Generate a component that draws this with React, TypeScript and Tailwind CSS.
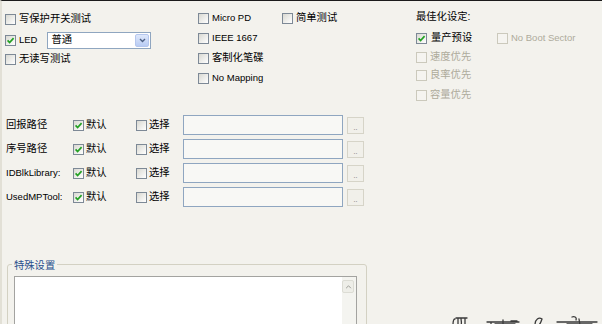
import React from "react";

function Cb({ checked = false, disabled = false }: { checked?: boolean; disabled?: boolean }) {
  return (
    <span
      className={
        disabled
          ? "relative inline-flex w-[11px] h-[11px] shrink-0 border border-[#cbc9bc] bg-[#f5f4f0]"
          : "relative inline-flex w-[11px] h-[11px] shrink-0 border border-[#7d8996] bg-gradient-to-br from-[#d9d9d2] to-white"
      }
    >
      {checked && (
        <svg viewBox="0 0 9 9" className="absolute inset-0 w-[9px] h-[9px]">
          <path d="M1.6 4.4 L3.6 6.5 L7.6 2.2" fill="none" stroke="#22a122" strokeWidth="1.7" />
        </svg>
      )}
    </span>
  );
}

function Item({
  label,
  checked = false,
  disabled = false,
  latin = false,
  gap = "gap-[3px]",
}: {
  label: string;
  checked?: boolean;
  disabled?: boolean;
  latin?: boolean;
  gap?: string;
}) {
  return (
    <div className={"flex items-center " + gap}>
      <Cb checked={checked} disabled={disabled} />
      <span
        className={
          (latin ? "text-[9.5px] " : "text-[10.3px] ") +
          (disabled ? "text-[#aeab9c]" : "text-black") +
          " leading-none whitespace-nowrap"
        }
      >
        {label}
      </span>
    </div>
  );
}

function PathRow({ label, latin = false }: { label: string; latin?: boolean }) {
  return (
    <div className="flex items-center h-[20px]">
      <span className={(latin ? "text-[9.5px]" : "text-[10.3px]") + " w-[68px] pl-[1px] leading-none text-black whitespace-nowrap"}>
        {label}
      </span>
      <div className="w-[63px]">
        <Item label="默认" checked gap="gap-[2px]" />
      </div>
      <div className="w-[47px]">
        <Item label="选择" gap="gap-[2px]" />
      </div>
      <div className="w-[160px] h-[20px] border border-[#8fa6c0] bg-[#f8f8f5]" />
      <div className="ml-[4px] w-[17px] h-[17px] border border-[#d6d4c8] bg-[#f1f0ea] flex items-end justify-center pb-[2px]">
        <span className="text-[7px] leading-none text-[#666]">..</span>
      </div>
    </div>
  );
}

export default function App() {
  return (
    <div className="relative w-[602px] h-[324px] overflow-hidden bg-[#f3f2ed] border-t border-[#1b1b1b] border-l-2 border-l-[#e2e0d6] font-['Liberation_Sans','Noto_Sans_CJK_SC',sans-serif] text-black">
      {/* top section */}
      <div className="flex h-[104px]">
        {/* col 1 */}
        <div className="w-[196px] pl-[3px] pt-[8px] flex flex-col">
          <div className="h-[20px] flex items-center">
            <Item label="写保护开关测试" />
          </div>
          <div className="h-[20px] mt-[1px] flex items-center">
            <Item label="LED" latin checked />
            <div className="ml-[10px] w-[104px] h-[17px] border border-[#8fa6c0] bg-white flex items-center">
              <span className="pl-[3px] text-[10.3px] leading-none flex-1">普通</span>
              <div className="w-[14px] h-[13px] mr-[1px] rounded-[2px] bg-gradient-to-b from-[#dfe8fb] to-[#b8ccf4] border border-[#b5c7ee] flex items-center justify-center">
                <svg viewBox="0 0 8 6" className="w-[7px] h-[5px]">
                  <path d="M1 1.2 L4 4.3 L7 1.2" fill="none" stroke="#4d6185" strokeWidth="1.6" />
                </svg>
              </div>
            </div>
          </div>
          <div className="h-[18px] flex items-center">
            <Item label="无读写测试" />
          </div>
        </div>
        {/* col 2 */}
        <div className="w-[218px] pt-[7px] flex flex-col">
          <div className="h-[20px] flex items-center">
            <div className="w-[84px]">
              <Item label="Micro PD" latin />
            </div>
            <Item label="简单测试" />
          </div>
          <div className="h-[20px] flex items-center">
            <Item label="IEEE 1667" latin />
          </div>
          <div className="h-[20px] flex items-center">
            <Item label="客制化笔碟" />
          </div>
          <div className="h-[20px] flex items-center">
            <Item label="No Mapping" latin />
          </div>
        </div>
        {/* col 3 */}
        <div className="flex-1 pt-[6px] flex flex-col">
          <div className="h-[20px] flex items-center">
            <span className="text-[10.3px] leading-none">最佳化设定:</span>
          </div>
          <div className="h-[20px] mt-[1px] flex items-center">
            <div className="w-[81px]">
              <Item label="量产预设" checked gap="gap-[4px]" />
            </div>
            <Item label="No Boot Sector" latin disabled />
          </div>
          <div className="h-[18px] flex items-center">
            <Item label="速度优先" disabled />
          </div>
          <div className="h-[18px] flex items-center">
            <Item label="良率优先" disabled />
          </div>
          <div className="h-[20px] mt-[1px] flex items-center">
            <Item label="容量优先" disabled />
          </div>
        </div>
      </div>

      {/* path rows */}
      <div className="mt-[10px] pl-[3px] flex flex-col gap-[4px]">
        <PathRow label="回报路径" />
        <PathRow label="序号路径" />
        <PathRow label="IDBlkLibrary:" latin />
        <PathRow label="UsedMPTool:" latin />
      </div>

      {/* group box */}
      <div className="relative mt-[57px] ml-[5px] w-[360px] h-[90px] border border-[#d3d1c3] rounded-[3px] pt-[11px] pl-[6px]">
        <span className="absolute left-[4px] -top-[6px] px-[2px] bg-[#f3f2ed] text-[10.3px] leading-[14px] text-[#284f8c]">
          特殊设置
        </span>
        <div className="w-[343px] h-[70px] border border-[#a3a3a0] bg-white flex justify-end">
          <div className="w-[14px] h-full bg-[#f4f4f0] pt-[3px] pr-[1px]">
            <div className="w-[12px] h-[13px] border border-[#dcdcd4] bg-[#eeeee8] rounded-[2px] flex items-center justify-center">
              <svg viewBox="0 0 8 5" className="w-[7px] h-[4px]">
                <path d="M1 4 L4 1 L7 4" fill="none" stroke="#9a9a94" strokeWidth="1.2" />
              </svg>
            </div>
          </div>
        </div>
      </div>

      {/* watermark fragment */}
      <svg className="absolute left-[445px] top-[312px] w-[157px] h-[12px]" viewBox="0 0 157 12">
        <g fill="none" stroke="#3a3a3a" strokeWidth="1.3" strokeLinecap="round">
          <path d="M6 12 C6 8 7 6 8 6 M11 12 L11 5 M14 5 C14 8 15 10 14 12 M18 6 L18 12 M9 5 L20 5" />
          <path d="M40 9 L72 9 M44 9 L44 12 M56 7 L56 12 M64 8 L70 8 M48 11 L68 11" />
          <path d="M88 12 C88 6 92 4 95 6 C94 9 93 11 92 12" />
          <path d="M110 9 L150 9 M125 4 C127 3 130 4 129 7 M120 11 L145 11 M132 6 L133 12" />
        </g>
      </svg>
    </div>
  );
}
